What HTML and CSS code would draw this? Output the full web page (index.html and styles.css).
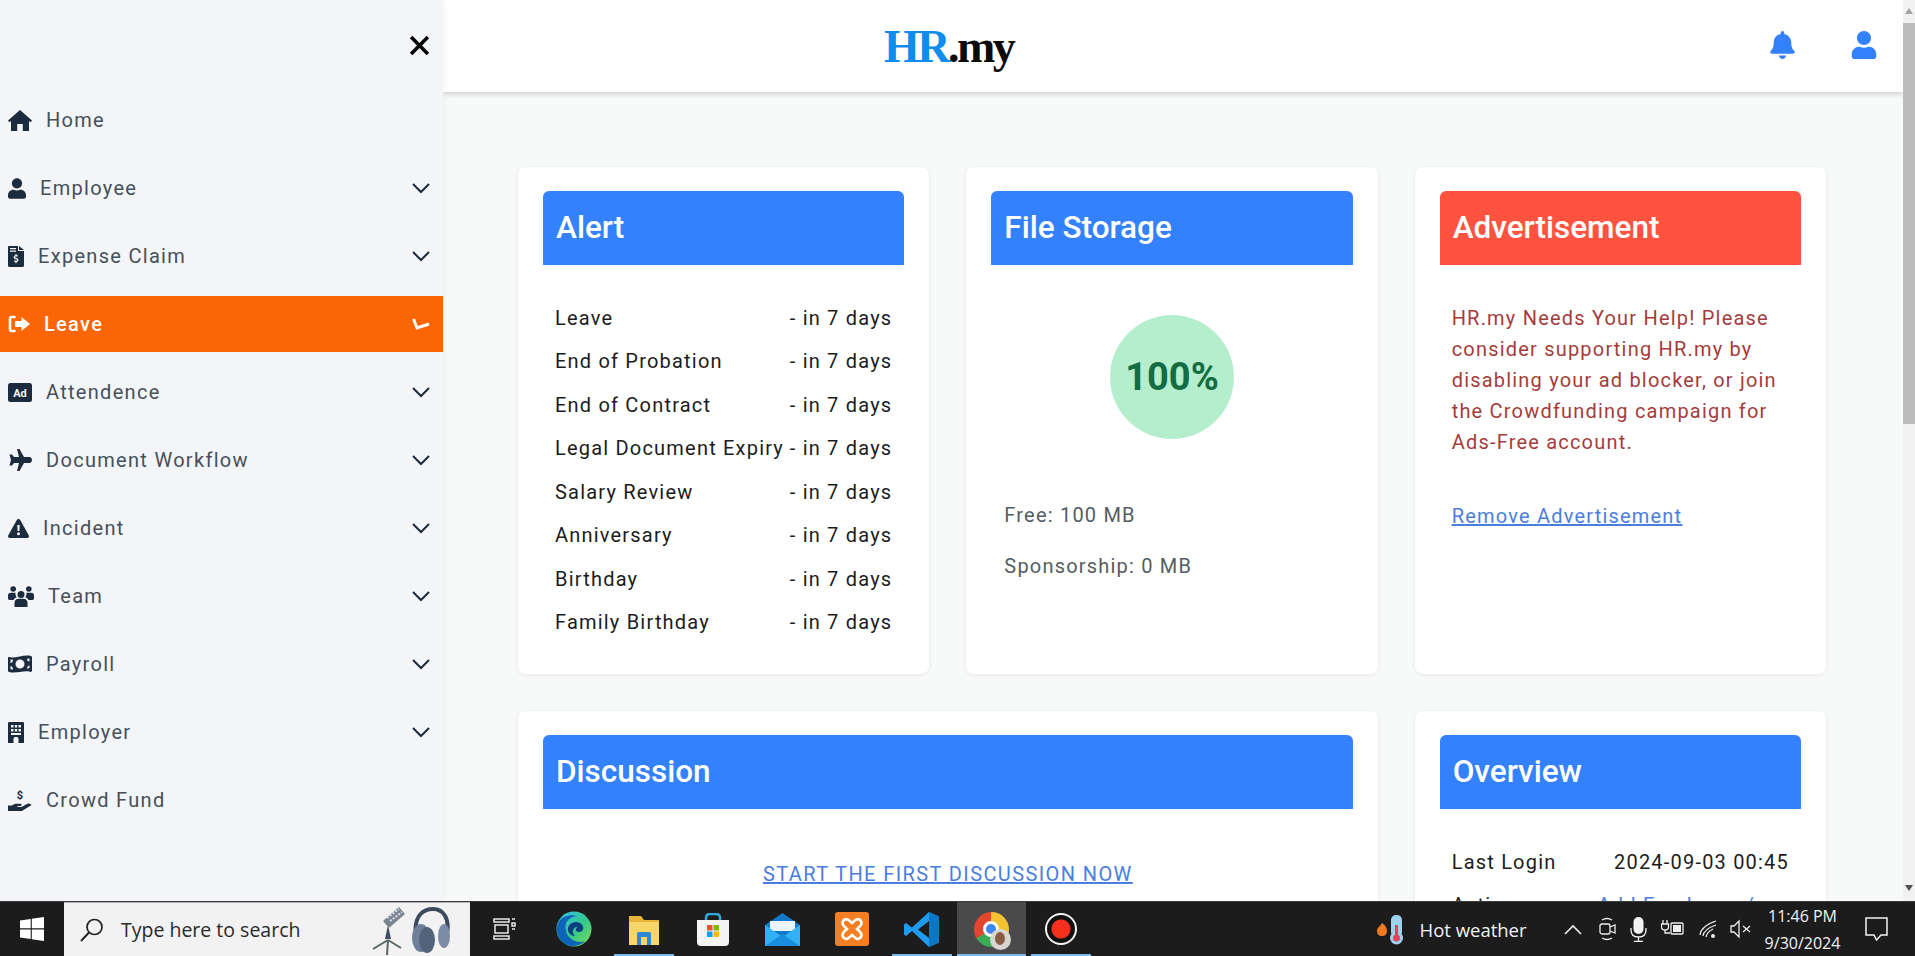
FILE: index.html
```html
<!DOCTYPE html>
<html lang="en">
<head>
    <meta charset="UTF-8">
    <meta name="viewport" content="width=device-width, initial-scale=1.0">
    <title>HR.my Dashboard</title>
    <link rel="stylesheet" href="styles.css">
</head>
<body>
    <div class="app">
        <aside class="sidebar">
            <div class="sidebar-top">
                <svg class="close-icon" viewBox="0 0 20 20"><path d="M2 2 18 18M18 2 2 18"/></svg>
            </div>
            <nav class="menu">
                <a class="menu-item">
                    <svg class="icon" width="24" height="21" viewBox="0 0 24 21"><path d="M12 0 24 10.5 22.6 12.2 21 10.9V21H14.8V14H9.2V21H3V10.9L1.4 12.2 0 10.5Z"/></svg>
                    <span>Home</span>
                </a>
                <a class="menu-item has-sub">
                    <svg class="icon" width="18" height="21" viewBox="0 0 448 512"><path d="M224 256c70.7 0 128-57.3 128-128S294.7 0 224 0 96 57.3 96 128s57.3 128 128 128zm89.6 32h-16.7c-22.2 10.2-46.9 16-72.9 16s-50.6-5.8-72.9-16h-16.7C60.2 288 0 348.2 0 422.4V464c0 26.5 21.5 48 48 48h352c26.5 0 48-21.5 48-48v-41.6c0-74.2-60.2-134.4-134.4-134.4z"/></svg>
                    <span>Employee</span>
                    <svg class="chevron" viewBox="0 0 18 12"><path d="M1 2 9 10 17 2"/></svg>
                </a>
                <a class="menu-item has-sub">
                    <svg class="icon" width="16" height="21" viewBox="0 0 16 21"><path fill-rule="evenodd" d="M1 0H10V5H16V19.5Q16 21 14.5 21H1.5Q0 21 0 19.5V1Q0 0 1 0ZM11 0 16 4H11ZM2 2V3.2H8V2ZM2 4.6V5.8H8V4.6ZM7.4 8V9.2C5.4 9.5 5 12.4 7 13L9 13.6C9.6 13.8 9.4 14.6 8.8 14.6H6.2V16H7.4V17.2H8.6V16C10.8 15.8 11.2 12.8 9.2 12.2L7.2 11.6C6.6 11.4 6.8 10.6 7.4 10.6H9.8V9.2H8.6V8Z"/></svg>
                    <span>Expense Claim</span>
                    <svg class="chevron" viewBox="0 0 18 12"><path d="M1 2 9 10 17 2"/></svg>
                </a>
                <a class="menu-item has-sub active">
                    <svg class="icon" width="22" height="18" viewBox="0 0 22 18"><path d="M6.5 2H3.5Q2 2 2 3.5V14.5Q2 16 3.5 16H6.5" fill="none" stroke="#fff" stroke-width="2.6" stroke-linecap="round"/><path d="M13.5 2 22 9 13.5 16V12H7V6H13.5Z"/></svg>
                    <span>Leave</span>
                    <svg class="chevron" viewBox="0 0 18 12"><path d="M1.500 1 5 10 17 6"/></svg>
                </a>
                <a class="menu-item has-sub">
                    <svg class="icon" width="24" height="19" viewBox="0 0 24 19"><rect width="24" height="19" rx="2.5"/><text class="ad-label" x="12" y="13.5" text-anchor="middle">Ad</text></svg>
                    <span>Attendence</span>
                    <svg class="chevron" viewBox="0 0 18 12"><path d="M1 2 9 10 17 2"/></svg>
                </a>
                <a class="menu-item has-sub">
                    <svg class="icon" width="24" height="22" viewBox="0 0 24 22"><path d="M9 0H11.5L16 8H21.5C23 8 24 9.8 24 11S23 14 21.500 14H16L11.500 22H9L11 14H6L4 16.500H1.500L3 11 1.500 5.500H4L6 8H11Z"/></svg>
                    <span>Document Workflow</span>
                    <svg class="chevron" viewBox="0 0 18 12"><path d="M1 2 9 10 17 2"/></svg>
                </a>
                <a class="menu-item has-sub">
                    <svg class="icon" width="21" height="19" viewBox="0 0 21 19"><path fill-rule="evenodd" d="M10.500 0C11.300 0 11.800 .5 12.200 1.100L20.700 16.200C21.400 17.500 20.500 19 19 19H2C.5 19 -.4 17.500 .3 16.200L8.800 1.100C9.200 .5 9.700 0 10.500 0ZM9.300 6 9.600 12H11.400L11.700 6ZM10.500 13.200A1.500 1.500 0 1 0 10.500 16.200 1.500 1.500 0 1 0 10.500 13.200Z"/></svg>
                    <span>Incident</span>
                    <svg class="chevron" viewBox="0 0 18 12"><path d="M1 2 9 10 17 2"/></svg>
                </a>
                <a class="menu-item has-sub">
                    <svg class="icon" width="26" height="21" viewBox="0 0 26 21"><circle cx="13" cy="8.500" r="3.500"/><path d="M6.500 21V17C6.500 14 8.500 12.800 10.500 12.800H15.500C17.500 12.800 19.500 14 19.500 17V21Z"/><circle cx="5.200" cy="3" r="2.800"/><circle cx="20.800" cy="3" r="2.800"/><path d="M0 12V9.500C0 7.500 1.500 6.800 3 6.800H7.500C7.300 8.500 7.800 10 8.700 11.200 7 12 6 12.600 5.500 14H1.500Q0 14 0 12ZM26 12V9.500C26 7.500 24.500 6.800 23 6.800H18.500C18.700 8.500 18.200 10 17.300 11.200 19 12 20 12.600 20.500 14H24.500Q26 14 26 12Z"/></svg>
                    <span>Team</span>
                    <svg class="chevron" viewBox="0 0 18 12"><path d="M1 2 9 10 17 2"/></svg>
                </a>
                <a class="menu-item has-sub">
                    <svg class="icon" width="24" height="18" viewBox="0 0 24 18"><path fill-rule="evenodd" d="M1 2C7 4 16-1 23 1Q24 1.300 24 2.500V15.500C24 17 23 17 22 16.800 16 15 8 19 1 17Q0 16.700 0 15.500V3C0 2 .3 1.800 1 2ZM12 4.500A4.500 4.500 0 1 0 12 13.500 4.500 4.500 0 1 0 12 4.500ZM2.500 4.500V8C4 8 5 6.500 5 4.800ZM21.500 3.500 19 3.800C19 5.500 20 6.500 21.500 6.500ZM2.500 11V14.300L5 14.600C5 13 4 11 2.500 11ZM21.500 10.500C20 10.500 19 12 19 13.500L21.500 13.300Z"/></svg>
                    <span>Payroll</span>
                    <svg class="chevron" viewBox="0 0 18 12"><path d="M1 2 9 10 17 2"/></svg>
                </a>
                <a class="menu-item has-sub">
                    <svg class="icon" width="16" height="21" viewBox="0 0 16 21"><path fill-rule="evenodd" d="M1 0H15Q16 0 16 1V21H10.500V17C10.500 15.500 9.500 15 8 15S5.500 15.500 5.500 17V21H0V1Q0 0 1 0ZM3 3V5.500H5.500V3ZM6.800 3V5.500H9.200V3ZM10.500 3V5.500H13V3ZM3 7V9.500H5.500V7ZM6.800 7V9.500H9.200V7ZM10.500 7V9.500H13V7ZM3 11V13H13V11Z"/></svg>
                    <span>Employer</span>
                    <svg class="chevron" viewBox="0 0 18 12"><path d="M1 2 9 10 17 2"/></svg>
                </a>
                <a class="menu-item">
                    <svg class="icon" width="24" height="21" viewBox="0 0 24 21"><path d="M0 15.500H4L7 13.800H12.500C14 13.800 14 16 12.500 16H9.500V17H13.500L19.500 13.800C21 13 23 14.300 23.500 15L15.500 20 14 21H0Z"/><text class="dollar-label" x="12" y="9" text-anchor="middle">$</text></svg>
                    <span>Crowd Fund</span>
                </a>
            </nav>
        </aside>

        <div class="page">
            <header class="topbar">
                <div class="logo"><span class="logo-hr">HR</span>.my</div>
                <div class="top-actions">
                    <svg class="top-icon" width="27" height="28" viewBox="0 0 448 512"><path d="M224 512c35.32 0 63.97-28.65 63.97-64H160.03c0 35.35 28.65 64 63.97 64zm215.39-149.71c-19.32-20.76-55.47-51.99-55.47-154.29 0-77.7-54.48-139.9-127.94-155.16V32c0-17.67-14.32-32-31.98-32s-31.98 14.33-31.98 32v20.84C118.56 68.1 64.08 130.3 64.08 208c0 102.3-36.15 133.53-55.47 154.29-6 6.45-8.66 14.16-8.61 21.71.11 16.4 12.98 32 32.1 32h383.8c19.12 0 32-15.6 32.1-32 .05-7.55-2.61-15.27-8.61-21.71z"/></svg>
                    <svg class="top-icon" width="26" height="28" viewBox="0 0 448 512"><path d="M224 256c70.7 0 128-57.3 128-128S294.7 0 224 0 96 57.3 96 128s57.3 128 128 128zm89.6 32h-16.7c-22.2 10.2-46.9 16-72.9 16s-50.6-5.8-72.900-16h-16.7C60.2 288 0 348.2 0 422.4V464c0 26.5 21.5 48 48 48h352c26.5 0 48-21.5 48-48v-41.6c0-74.2-60.2-134.4-134.4-134.400z"/></svg>
                </div>
            </header>
            <main class="content">
                <section class="card">
                    <h2 class="card-title">Alert</h2>
                    <ul class="alert-list">
                        <li><span>Leave</span><span>- in 7 days</span></li>
                        <li><span>End of Probation</span><span>- in 7 days</span></li>
                        <li><span>End of Contract</span><span>- in 7 days</span></li>
                        <li><span>Legal Document Expiry</span><span>- in 7 days</span></li>
                        <li><span>Salary Review</span><span>- in 7 days</span></li>
                        <li><span>Anniversary</span><span>- in 7 days</span></li>
                        <li><span>Birthday</span><span>- in 7 days</span></li>
                        <li><span>Family Birthday</span><span>- in 7 days</span></li>
                    </ul>
                </section>
                <section class="card">
                    <h2 class="card-title">File Storage</h2>
                    <div class="storage-circle">100%</div>
                    <p class="storage-line first">Free: 100 MB</p>
                    <p class="storage-line">Sponsorship: 0 MB</p>
                </section>
                <section class="card">
                    <h2 class="card-title red">Advertisement</h2>
                    <p class="ad-text">HR.my Needs Your Help! Please consider supporting HR.my by disabling your ad blocker, or join the Crowdfunding campaign for Ads-Free account.</p>
                    <a class="link ad-link">Remove Advertisement</a>
                </section>
                <section class="card wide">
                    <h2 class="card-title">Discussion</h2>
                    <div class="discussion-body"><a class="link">START THE FIRST DISCUSSION NOW</a></div>
                </section>
                <section class="card">
                    <h2 class="card-title">Overview</h2>
                    <div class="overview-row first"><span>Last Login</span><span>2024-09-03 00:45</span></div>
                    <div class="overview-row"><span>Active</span><a class="overview-link">Add Employee /</a></div>
                </section>
            </main>
        </div>

        <div class="scrollbar">
            <div class="arrow-up"></div>
            <div class="thumb"></div>
            <div class="arrow-down"></div>
        </div>
    </div>

    <footer class="taskbar">
        <div class="start">
            <svg width="24" height="24" viewBox="0 0 24 24"><path fill="#fff" d="M0 3.400 10.700 2V11.300H0ZM11.800 1.800 24 0V11.300H11.800ZM0 12.500H10.700V22L0 20.500ZM11.800 12.500H24V24L11.800 22.200Z"/></svg>
        </div>
        <div class="search">
            <svg width="24" height="24" viewBox="0 0 24 24"><circle cx="14.500" cy="9" r="7.500" fill="none" stroke="#222" stroke-width="1.700"/><path d="M9 14.500 1 23" stroke="#222" stroke-width="1.900"/></svg>
            <span class="search-text">Type here to search</span>
            <svg class="search-art" width="34" height="50" viewBox="0 0 34 50"><path d="M17 35 2 44M17 35 30 43M17 35 16 50" stroke="#566" stroke-width="2" fill="none"/><path d="M17 20 14 34H20Z" fill="#3f4c66"/><path d="M12 16 28 2 34 9 18 23Z" fill="#7c8492"/><path d="M16 13 28 4M19 16 31 7" stroke="#dfe3e8" stroke-width="2" stroke-dasharray="2 1.500"/></svg>
            <svg class="search-art" width="40" height="48" viewBox="0 0 40 48"><path d="M5 30C2 8 14 3 22 3 32 3 39 12 36 28" fill="none" stroke="#3e4a5e" stroke-width="4"/><ellipse cx="10" cy="32" rx="9" ry="14" fill="#6d7f9a"/><ellipse cx="16" cy="34" rx="8" ry="13" fill="#53637c"/><ellipse cx="33" cy="30" rx="6" ry="12" fill="#7a8ba5"/></svg>
        </div>
        <div class="apps">
            <div class="app-slot">
                <svg width="23" height="22" viewBox="0 0 23 22" fill="none" stroke="#e8e8e8" stroke-width="1.500"><path d="M1 1H16V4H1ZM1 21H16V18H1ZM2 7H15V15H2ZM19 1H22M19 5H22V8H19ZM19 11H22"/></svg>
            </div>
            <div class="app-slot">
                <svg width="36" height="36" viewBox="0 0 36 36"><defs><linearGradient id="edgeGrad" x1="0" y1="0" x2="1" y2="1"><stop offset="0" stop-color="#35c1f1"/><stop offset=".55" stop-color="#34c88a"/><stop offset="1" stop-color="#7edb52"/></linearGradient></defs><circle cx="18" cy="18" r="17.500" fill="url(#edgeGrad)"/><path d="M1 18C1 7 12 2 21 5 12 6 8 12 10 20 12 29 22 33 29 30 24 35 16 36 11 34 5 31 1 25 1 18Z" fill="#0c63b8"/><path d="M12 20C11 13 18 9 24 12 29 15 28 21 23 21 19 21 19 17 22 16 17 15 15 21 19 25 16 25 13 23 12 20Z" fill="#0a3f80"/></svg>
            </div>
            <div class="app-slot underline">
                <svg width="30" height="32" viewBox="0 0 30 32"><path d="M0 3H12L15 7H30V32H0Z" fill="#e8b73a"/><path d="M0 9H30V32H0Z" fill="#f8d568"/><path d="M8 32V21Q8 19 10 19H20Q22 19 22 21V32H18V24H12V32Z" fill="#2f87d5"/></svg>
            </div>
            <div class="app-slot">
                <svg width="32" height="33" viewBox="0 0 32 33"><path d="M9 9V5Q9 1 13 1H19Q23 1 23 5V9" fill="none" stroke="#30a9dc" stroke-width="2.500"/><path d="M0 7H32V29Q32 33 28 33H4Q0 33 0 29Z" fill="#f4f4f4"/><rect x="10" y="12" width="5.500" height="5.500" fill="#f25022"/><rect x="16.500" y="12" width="5.500" height="5.500" fill="#7fba00"/><rect x="10" y="18.500" width="5.500" height="5.500" fill="#00a4ef"/><rect x="16.500" y="18.500" width="5.500" height="5.500" fill="#ffb900"/></svg>
            </div>
            <div class="app-slot">
                <svg width="35" height="33" viewBox="0 0 35 33"><path d="M0 12 17.500 0 35 12V33H0Z" fill="#1479c9"/><path d="M5 8H30V18H5Z" fill="#e8f3fb"/><path d="M0 12 17.500 24 35 12V33H0Z" fill="#32b2f4"/><path d="M0 33 17.500 21 35 33Z" fill="#1a8fe0"/></svg>
            </div>
            <div class="app-slot">
                <svg width="34" height="34" viewBox="0 0 34 34"><rect width="34" height="34" rx="3" fill="#f37f22"/><path d="M9 8C13 5 15 10 17 11 19 10 21 5 25 8 29 12 24 15 22 17 24 19 29 22 25 26 21 29 19 24 17 23 15 24 13 29 9 26 5 22 10 19 12 17 10 15 5 12 9 8Z" fill="none" stroke="#fff" stroke-width="2.600"/></svg>
            </div>
            <div class="app-slot underline">
                <svg width="35" height="35" viewBox="0 0 35 35"><path d="M25 0 35 4.500V30.500L25 35 8 19 2 24 0 22.500V12.500L2 11 8 15.500ZM25 9 14 17.500 25 26Z" fill="#1f9cf0"/><path d="M25 0 35 4.500V30.500L25 35Z" fill="#0a78c4"/></svg>
            </div>
            <div class="app-slot underline current">
                <div class="chrome-logo"><div class="chrome-dot"></div><div class="chrome-avatar"><div class="avatar-head"></div></div></div>
            </div>
            <div class="app-slot underline">
                <div class="record-icon"></div>
            </div>
        </div>
        <div class="tray">
            <svg class="tray-thermo" width="27" height="31" viewBox="0 0 27 31"><path d="M5 9C9 12 10 14 10 17 10 20 8 22 5 22 2 22 0 20 0 17 0 13 4 12 5 9Z" fill="#ef7a1f"/><rect x="14" y="1" width="11" height="22" rx="5" fill="#9fd0ee"/><circle cx="19.500" cy="24" r="6.500" fill="#9fd0ee"/><rect x="18" y="11" width="3" height="12" fill="#e8405c"/><circle cx="19.500" cy="24" r="3.500" fill="#e8405c"/></svg>
            <span class="weather">Hot weather</span>
            <svg class="tray-caret" width="18" height="11" viewBox="0 0 18 11"><path d="M1 10 9 2 17 10" fill="none" stroke="#eee" stroke-width="1.600"/></svg>
            <svg class="tray-meet" width="17" height="24" viewBox="0 0 17 24" fill="none" stroke="#eee" stroke-width="1.300"><path d="M3 3Q8 0 13 3M3 21Q8 24 13 21"/><rect x="1" y="7" width="10" height="10" rx="2"/><path d="M11 10 16 8V16L11 14"/></svg>
            <svg class="tray-mic" width="17" height="25" viewBox="0 0 17 25"><rect x="3.500" width="10" height="17" rx="5" fill="#f2f2f2"/><path d="M1 11V13Q1 20 8.500 20T16 13V11M8.500 20V24M4 24.300H13" fill="none" stroke="#f2f2f2" stroke-width="1.300"/></svg>
            <svg class="tray-power" width="23" height="18" viewBox="0 0 23 18" fill="none" stroke="#eee" stroke-width="1.300"><path d="M2 0V4M6 0V4M.5 4H7.500V7Q7.500 10 4 10T.5 7ZM4 10V13H9"/><rect x="10" y="3" width="12" height="11" rx="1"/><rect x="12" y="5" width="8" height="7" fill="#eee" stroke="none"/></svg>
            <svg class="tray-wifi" width="19" height="19" viewBox="0 0 19 19" fill="none" stroke="#eee" stroke-width="1.300"><path d="M1 15Q2 6 17 1M4 16Q5 9 17 5M7 17Q8 12 14 9"/><circle cx="14" cy="16" r="2" fill="#eee" stroke="none"/></svg>
            <svg class="tray-volume" width="21" height="20" viewBox="0 0 21 20" fill="none" stroke="#eee" stroke-width="1.300"><path d="M1 7H4L9 2V18L4 13H1ZM13 7 20 13M20 7 13 13"/></svg>
            <div class="clock"><span>11:46 PM</span><span>9/30/2024</span></div>
            <svg class="tray-notify" width="23" height="24" viewBox="0 0 23 24"><path d="M1 1H22V18H16L11.500 23 9 18H1Z" fill="none" stroke="#f2f2f2" stroke-width="1.500"/></svg>
        </div>
    </footer>
</body>
</html>
```

FILE: styles.css
```css
* {
    margin: 0;
    padding: 0;
    box-sizing: border-box;
}
html, body {
    height: 100%;
    overflow: hidden;
}
body {
    display: flex;
    flex-direction: column;
    font-family: Roboto, sans-serif;
    background: #f8f9f9;
}
.app {
    display: flex;
    height: 901px;
    overflow: hidden;
}

/* sidebar */
.sidebar {
    width: 443px;
    flex-shrink: 0;
    background: #f3f5f8;
    box-shadow: 2px 0 6px rgba(0, 0, 0, 0.04);
    z-index: 2;
}
.sidebar-top {
    height: 92px;
    display: flex;
    justify-content: flex-end;
    align-items: center;
    padding-right: 13px;
}
.close-icon {
    width: 21px;
    height: 21px;
    margin-bottom: 2px;
    fill: none;
    stroke: #050505;
    stroke-width: 3.4;
}
.menu {
    display: flex;
    flex-direction: column;
    gap: 12px;
}
.menu-item {
    height: 56px;
    display: flex;
    align-items: center;
    padding: 0 13px 0 8px;
    color: #46505b;
    font-size: 20px;
    letter-spacing: 1.3px;
}
.menu-item span {
    margin-left: 14px;
    flex: 1;
}
.icon {
    flex-shrink: 0;
    fill: #1d2b3e;
}
.ad-label {
    font-family: Roboto, sans-serif;
    font-size: 11px;
    font-weight: 700;
    fill: #f3f5f8;
    letter-spacing: 0;
}
.dollar-label {
    font-family: Roboto, sans-serif;
    font-size: 11px;
    font-weight: 700;
    fill: #1d2b3e;
    letter-spacing: 0;
}
.chevron {
    width: 18px;
    height: 12px;
    flex-shrink: 0;
    fill: none;
    stroke: #1d2b3e;
    stroke-width: 2;
}
.menu-item.active {
    background: #fb6505;
    color: #fff;
    font-weight: 500;
}
.active .icon {
    fill: #fff;
}
.active .chevron {
    stroke: #fff;
    stroke-width: 3;
}

/* right side */
.page {
    flex: 1;
    min-width: 0;
}
.topbar {
    height: 92px;
    background: #fff;
    box-shadow: 0 2px 5px rgba(0, 0, 0, 0.18);
    display: flex;
    align-items: center;
    justify-content: space-between;
    padding: 0 26px 0 441px;
}
.logo {
    font-family: "Liberation Serif", serif;
    font-weight: 700;
    font-size: 46px;
    letter-spacing: -2.5px;
    color: #0b0b0b;
}
.logo-hr {
    color: #0f8def;
}
.top-actions {
    display: flex;
    gap: 55px;
    margin-top: -2px;
}
.top-icon {
    fill: #3381fd;
}
.content {
    display: grid;
    grid-template-columns: repeat(3, 1fr);
    grid-template-rows: 507px auto;
    gap: 37px;
    padding: 75px 77px 0 75px;
}
.card {
    background: #fff;
    border-radius: 8px;
    box-shadow: 0 1px 4px rgba(0, 0, 0, 0.08);
    padding: 24px 25px 0;
}
.card.wide {
    grid-column: span 2;
}
.card-title {
    height: 74px;
    line-height: 74px;
    padding-left: 13px;
    background: #3381fd;
    color: #fff;
    font-size: 31.5px;
    font-weight: 500;
    border-radius: 6px 6px 0 0;
}
.card-title.red {
    background: #ff5340;
}
.alert-list {
    list-style: none;
    padding: 31px 12px 0;
    color: #1c1c1c;
    font-size: 20px;
    letter-spacing: 1.2px;
}
.alert-list li {
    height: 43.500px;
    display: flex;
    align-items: center;
    justify-content: space-between;
    white-space: nowrap;
}
.storage-circle {
    width: 124px;
    height: 124px;
    margin: 50px auto 0;
    border-radius: 50%;
    background: #b5eecd;
    color: #146c43;
    font-size: 38px;
    font-weight: 700;
    display: flex;
    align-items: center;
    justify-content: center;
}
.storage-line {
    padding-left: 13px;
    height: 51px;
    line-height: 51px;
    color: #555c63;
    font-size: 20px;
    letter-spacing: 1.2px;
}
.storage-line.first {
    margin-top: 51px;
}
.ad-text {
    margin-top: 38px;
    padding: 0 12px;
    color: #a53c3c;
    font-size: 20px;
    line-height: 31px;
    letter-spacing: 1.2px;
}
.link {
    color: #4a7ede;
    font-size: 20px;
    letter-spacing: 1.2px;
    text-decoration: underline;
}
.ad-link {
    display: block;
    margin-top: 46px;
    padding-left: 12px;
}
.discussion-body {
    margin-top: 53px;
    text-align: center;
}
.discussion-body .link {
    letter-spacing: 1.4px;
}
.overview-row {
    display: flex;
    justify-content: space-between;
    padding: 0 12px;
    color: #1c1c1c;
    font-size: 20px;
    letter-spacing: 1.2px;
    height: 43px;
    line-height: 43px;
}
.overview-row.first {
    margin-top: 32px;
}
.overview-link {
    color: #4a7ede;
    margin-right: 34px;
}

/* scrollbar */
.scrollbar {
    width: 12px;
    flex-shrink: 0;
    background: #f1f1f1;
    display: flex;
    flex-direction: column;
    align-items: center;
    position: relative;
}
.arrow-up {
    margin-top: 8px;
    border: 4px solid transparent;
    border-top: 0;
    border-bottom: 6px solid #a3a3a3;
}
.thumb {
    width: 12px;
    height: 401px;
    margin-top: 9px;
    background: #bcbcbc;
}
.arrow-down {
    margin-top: auto;
    margin-bottom: 10px;
    border: 4px solid transparent;
    border-bottom: 0;
    border-top: 6px solid #505050;
}

/* windows taskbar */
.taskbar {
    height: 55px;
    background: #1c1c1c;
    display: flex;
    align-items: center;
    border-top: 1px solid #3a3a3a;
    z-index: 3;
}
.start {
    width: 64px;
    height: 100%;
    display: flex;
    align-items: center;
    justify-content: center;
}
.search {
    width: 406px;
    height: 100%;
    background: #f2f2f2;
    border-top: 1px solid #b5b5b5;
    display: flex;
    align-items: center;
    padding-left: 16px;
}
.search-text {
    margin-left: 17px;
    width: 250px;
    color: #2a2a2a;
    font-family: "Open Sans", sans-serif;
    font-size: 19.500px;
    white-space: nowrap;
}
.search-art {
    margin-right: 6px;
    flex-shrink: 0;
}
.apps {
    display: flex;
    height: 100%;
}
.app-slot {
    width: 69.500px;
    height: 100%;
    display: flex;
    align-items: center;
    justify-content: center;
    position: relative;
}
.app-slot.underline::after {
    content: "";
    position: absolute;
    left: 5px;
    right: 5px;
    bottom: 0;
    height: 2px;
    background: #76b9ed;
}
.app-slot.current {
    background: #4a4a4a;
}
.app-slot.current::after {
    left: 0;
    right: 0;
}
.chrome-logo {
    width: 35px;
    height: 35px;
    border-radius: 50%;
    background: conic-gradient(#f2c230 0 120deg, #3cab54 120deg 240deg, #e4452f 240deg 360deg);
    display: flex;
    align-items: center;
    justify-content: center;
    position: relative;
}
.chrome-dot {
    width: 16px;
    height: 16px;
    border-radius: 50%;
    background: #3f86f0;
    border: 3px solid #fff;
}
.chrome-avatar {
    position: absolute;
    right: -2px;
    bottom: -3px;
    width: 21px;
    height: 21px;
    border-radius: 50%;
    background: #d9d6d2;
    display: flex;
    justify-content: center;
    padding-top: 3px;
}
.avatar-head {
    width: 10px;
    height: 13px;
    border-radius: 50%;
    background: #8a5b45;
}
.record-icon {
    width: 32px;
    height: 32px;
    border-radius: 50%;
    border: 2px solid #f4f4f4;
    background: radial-gradient(circle, #f5301d 0 9px, #111 10px);
}
.tray {
    flex: 1;
    height: 100%;
    display: flex;
    align-items: center;
    padding-left: 281px;
    color: #f2f2f2;
}
.weather {
    margin-left: 16px;
    width: 108px;
    font-family: "Open Sans", sans-serif;
    font-size: 18.500px;
    white-space: nowrap;
}
.tray-caret {
    margin-left: 36px;
}
.tray-meet {
    margin-left: 17px;
}
.tray-mic {
    margin-left: 14px;
}
.tray-power {
    margin-left: 14px;
}
.tray-wifi {
    margin-left: 15px;
}
.tray-volume {
    margin-left: 12px;
}
.clock {
    width: 74px;
    margin-left: 15px;
    display: flex;
    flex-direction: column;
    align-items: center;
    gap: 7px;
    font-family: "Open Sans", sans-serif;
    font-size: 16px;
    line-height: 20px;
    white-space: nowrap;
}
.tray-notify {
    margin-left: 25px;
}
```
